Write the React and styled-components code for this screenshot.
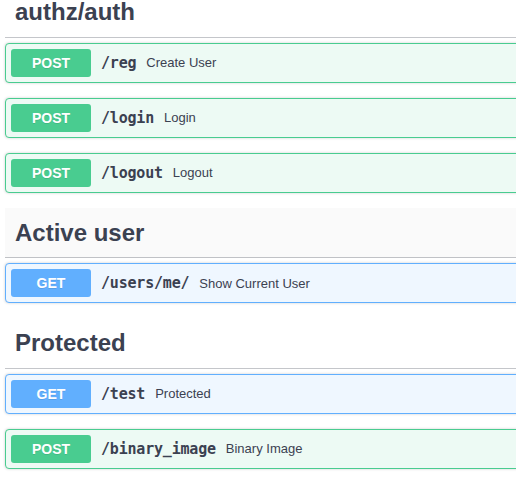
import React from "react";
import styled, { createGlobalStyle, css } from "styled-components";

const Global = createGlobalStyle`
  html, body { margin: 0; padding: 0; background: #fff; overflow: hidden; }
  body { font-family: "Liberation Sans", Arial, sans-serif; color: #3b4151; }
`;

const METHODS = {
  post: { main: "#49cc90", bg: "#edfaf4" },
  get: { main: "#61affe", bg: "#eff7ff" },
};

const Wrapper = styled.div`
  width: 560px;
  margin-top: -13px;
  padding-left: 5px;
`;

const Section = styled.section`
  display: flex;
  flex-direction: column;
`;

const TagHeader = styled.h3`
  margin: 0 0 5px;
  padding: 10px 20px 10px 10px;
  font-family: "Liberation Sans", Arial, sans-serif;
  font-size: 24px;
  font-weight: 700;
  line-height: 29.5px;
  color: #3b4151;
  border-bottom: 1px solid rgba(59, 65, 81, 0.3);
  ${(p) =>
    p.$hover &&
    css`
      background: #fafafa;
    `}
`;

const Block = styled.div`
  display: flex;
  align-items: center;
  padding: 5px;
  margin: 0 0 15px;
  border: 1px solid ${(p) => METHODS[p.$method].main};
  background: ${(p) => METHODS[p.$method].bg};
  border-radius: 4px;
  box-shadow: 0 0 3px rgba(0, 0, 0, 0.19);
`;

const Badge = styled.span`
  min-width: 80px;
  padding: 6px 0;
  font-family: "Liberation Sans", Arial, sans-serif;
  font-size: 14px;
  font-weight: 700;
  line-height: 16px;
  text-align: center;
  color: #fff;
  border-radius: 3px;
  background: ${(p) => METHODS[p.$method].main};
  text-shadow: 0 1px 0 rgba(0, 0, 0, 0.1);
`;

const Path = styled.span`
  padding: 0 10px;
  font-family: "DejaVu Sans Mono", "Liberation Mono", monospace;
  font-size: 15px;
  letter-spacing: -0.2px;
  font-weight: 700;
  color: #3b4151;
`;

const Summary = styled.span`
  font-family: "Liberation Sans", Arial, sans-serif;
  font-size: 13px;
  color: #3b4151;
`;

const sections = [
  {
    name: "authz/auth",
    ops: [
      { method: "post", path: "/reg", summary: "Create User" },
      { method: "post", path: "/login", summary: "Login" },
      { method: "post", path: "/logout", summary: "Logout" },
    ],
  },
  {
    name: "Active user",
    hover: true,
    ops: [{ method: "get", path: "/users/me/", summary: "Show Current User" }],
  },
  {
    name: "Protected",
    ops: [
      { method: "get", path: "/test", summary: "Protected" },
      { method: "post", path: "/binary_image", summary: "Binary Image" },
    ],
  },
];

export default function App() {
  return (
    <>
      <Global />
      <Wrapper>
        {sections.map((s) => (
          <Section key={s.name}>
            <TagHeader $hover={s.hover}>{s.name}</TagHeader>
            {s.ops.map((o) => (
              <Block key={o.path} $method={o.method}>
                <Badge $method={o.method}>{o.method.toUpperCase()}</Badge>
                <Path>{o.path}</Path>
                <Summary>{o.summary}</Summary>
              </Block>
            ))}
          </Section>
        ))}
      </Wrapper>
    </>
  );
}
